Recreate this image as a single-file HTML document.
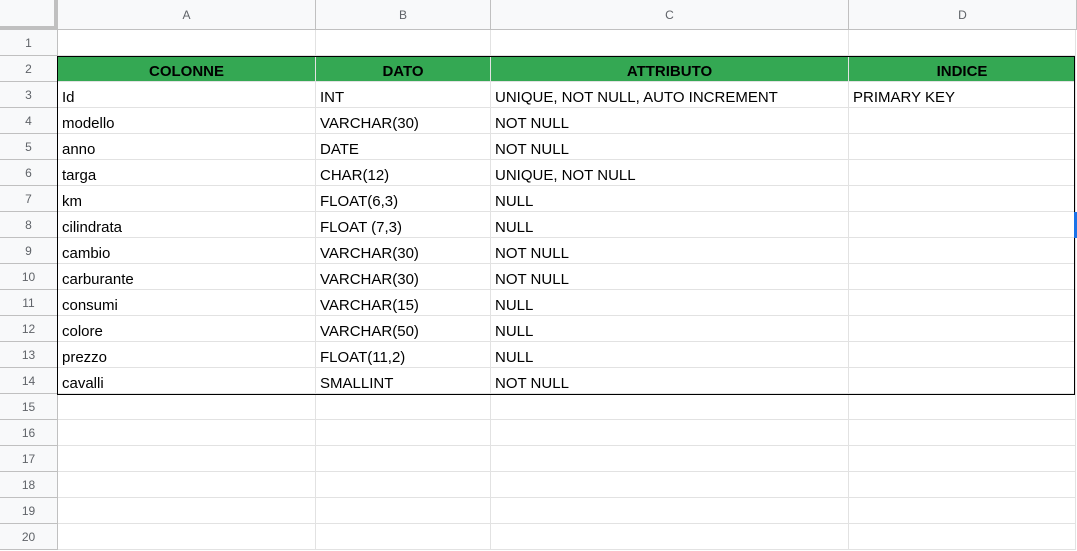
<!DOCTYPE html>
<html><head><style>
body{margin:0;width:1077px;height:551px;overflow:hidden;background:#fff;font-family:"Liberation Sans",Arial,sans-serif;position:relative}
.a{position:absolute;box-sizing:border-box}
.ch{background:#f8f9fa;color:#5f6368;font-size:12px;text-align:center;line-height:31px;top:0;height:30px;border-right:1px solid #c0c0c0;border-bottom:1px solid #c0c0c0}
.rh{background:#f8f9fa;color:#5f6368;font-size:12px;text-align:center;left:0;width:58px;height:26px;line-height:26px;border-right:1px solid #c0c0c0;border-bottom:1px solid #c0c0c0}
.c{height:26px;line-height:20px;padding-top:6px;font-size:15px;color:#000;padding-left:4px;border-right:1px solid #e2e2e2;border-bottom:1px solid #e2e2e2;white-space:nowrap;overflow:hidden}
.g{background:#34a853;font-weight:bold;text-align:center;padding-left:0}
</style></head><body>
<div class="a ch" style="left:0;width:58px;border-right:4px solid #c0c0c0;border-bottom:4px solid #c0c0c0;"></div>
<div class="a ch" style="left:58px;width:258px">A</div>
<div class="a ch" style="left:316px;width:175px">B</div>
<div class="a ch" style="left:491px;width:358px">C</div>
<div class="a ch" style="left:849px;width:228px">D</div>
<div id="g"></div>
<div class="a" style="left:57px;top:56px;width:1018px;height:339px;border:1px solid #000"></div>
<div class="a" style="left:1074px;top:212px;width:3px;height:26px;background:#1a73e8"></div>
<script>
var rows=[["","","",""],["COLONNE","DATO","ATTRIBUTO","INDICE"],["Id","INT","UNIQUE, NOT NULL, AUTO INCREMENT","PRIMARY KEY"],["modello","VARCHAR(30)","NOT NULL",""],["anno","DATE","NOT NULL",""],["targa","CHAR(12)","UNIQUE, NOT NULL",""],["km","FLOAT(6,3)","NULL",""],["cilindrata","FLOAT (7,3)","NULL",""],["cambio","VARCHAR(30)","NOT NULL",""],["carburante","VARCHAR(30)","NOT NULL",""],["consumi","VARCHAR(15)","NULL",""],["colore","VARCHAR(50)","NULL",""],["prezzo","FLOAT(11,2)","NULL",""],["cavalli","SMALLINT","NOT NULL",""]];
var xs=[58,316,491,849,1076],h="";
for(var r=0;r<20;r++){var y=30+r*26;
h+='<div class="a rh" style="top:'+y+'px">'+(r+1)+'</div>';
for(var c=0;c<4;c++){var t=rows[r]?rows[r][c]:"";
h+='<div class="a c'+(r==1?' g':'')+'" style="left:'+xs[c]+'px;top:'+y+'px;width:'+(xs[c+1]-xs[c])+'px">'+t+'</div>';}}
document.getElementById("g").outerHTML=h;
</script>
</body></html>
